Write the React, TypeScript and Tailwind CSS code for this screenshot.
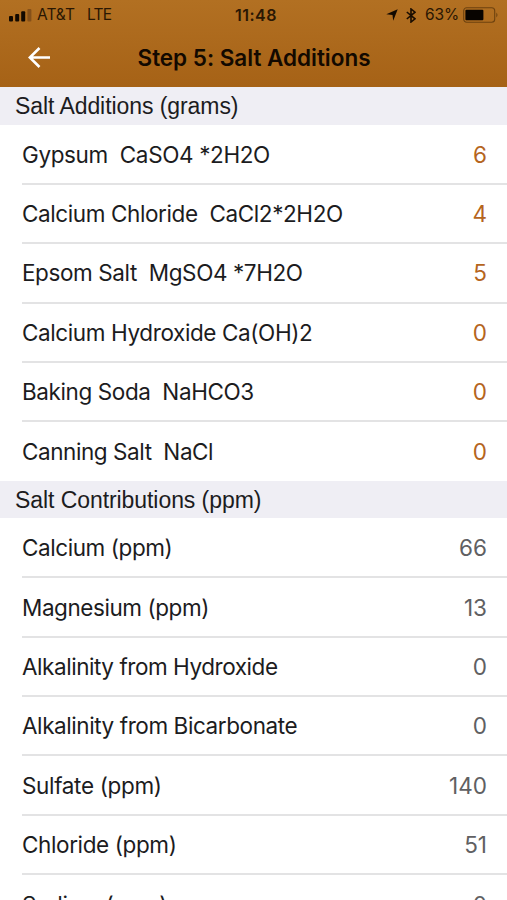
import { clsx } from "clsx";

type Item = { label: string; value: number; spacing: string };

const SALT_ADDITIONS: Item[] = [
  { label: "Gypsum  CaSO4 *2H2O", value: 6, spacing: "tracking-[-0.37px]" },
  { label: "Calcium Chloride  CaCl2*2H2O", value: 4, spacing: "tracking-[-0.4px]" },
  { label: "Epsom Salt  MgSO4 *7H2O", value: 5, spacing: "tracking-[-0.4px]" },
  { label: "Calcium Hydroxide Ca(OH)2", value: 0, spacing: "tracking-[-0.39px]" },
  { label: "Baking Soda  NaHCO3", value: 0, spacing: "tracking-[-0.4px]" },
  { label: "Canning Salt  NaCl", value: 0, spacing: "tracking-[-0.43px]" },
];

const SALT_CONTRIBUTIONS: Item[] = [
  { label: "Calcium (ppm)", value: 66, spacing: "tracking-[-0.42px]" },
  { label: "Magnesium (ppm)", value: 13, spacing: "tracking-[-0.44px]" },
  { label: "Alkalinity from Hydroxide", value: 0, spacing: "tracking-[-0.45px]" },
  { label: "Alkalinity from Bicarbonate", value: 0, spacing: "tracking-[-0.42px]" },
  { label: "Sulfate (ppm)", value: 140, spacing: "tracking-[-0.34px]" },
  { label: "Chloride (ppm)", value: 51, spacing: "tracking-[-0.38px]" },
  { label: "Sodium (ppm)", value: 0, spacing: "tracking-[-0.42px]" },
];

function StatusBar() {
  return (
    <div className="grid h-[29px] grid-cols-3 items-center pt-px text-[15.5px] text-[#2a1703]">
      <div className="flex items-center pl-[9px]">
        <svg width="23" height="13" viewBox="0 0 23 13" className="mr-[5px]">
          <rect x="0" y="7" width="4" height="5.5" rx="1" fill="#120900" />
          <rect x="6.2" y="5" width="4" height="7.5" rx="1" fill="#120900" />
          <rect x="12.2" y="2.2" width="4" height="10.3" rx="1" fill="#120900" />
          <rect x="18.4" y="0" width="4" height="12.5" rx="1" fill="#855019" />
        </svg>
        <span className="whitespace-pre">AT&amp;T</span>
        <span className="ml-[12px] tracking-[-0.7px]">LTE</span>
      </div>
      <div className="pl-[5px] text-center text-[16px] font-semibold tracking-[0.5px]">11:48</div>
      <div className="flex items-center justify-end pr-[8px]">
        <svg width="12" height="12" viewBox="0 0 12 12" className="mr-[8px]">
          <path d="M11.7.3 7.2 11.7 6.5 5.9.3 5.2z" fill="#120900" />
        </svg>
        <svg width="10" height="15" viewBox="0 0 10 15" className="mr-[9px]" fill="none" stroke="#1a0d00" strokeWidth="1.6">
          <path d="M.8 4 9 10.8 5 14V1l4 3.2L.8 11" />
        </svg>
        <span className="mr-[4px] tracking-[-0.1px]">63%</span>
        <svg width="36" height="16" viewBox="0 0 36 16">
          <rect x=".7" y=".7" width="31" height="14.6" rx="3" fill="none" stroke="#6d420f" strokeWidth="1.1" />
          <rect x="2.4" y="2.7" width="18" height="10.6" rx="1" fill="#080400" />
          <path d="M33.3 5.5q2.4 2.5 0 5z" fill="#6d420f" />
        </svg>
      </div>
    </div>
  );
}

function Header() {
  return (
    <header className="h-[87px] bg-linear-to-b from-[#b27022] to-[#a66216]">
      <StatusBar />
      <div className="grid h-[57px] grid-cols-[80px_1fr_80px] items-center">
        <button className="pl-[28px]" aria-label="Back">
          <svg width="22" height="22" viewBox="0 0 22 22" fill="none" stroke="white" strokeWidth="2.6">
            <path d="M11.5 1 1.8 10.5l9.7 9.5M2 10.5h20" />
          </svg>
        </button>
        <h1 className="whitespace-nowrap pl-px text-center text-[22.5px] font-semibold tracking-[-0.02px] text-[#120900]">
          Step 5: Salt Additions
        </h1>
      </div>
    </header>
  );
}

function Row({ item, editable, last }: { item: Item; editable?: boolean; last: boolean }) {
  return (
    <li
      className={clsx(
        "ml-[22px] flex h-[59.35px] items-center justify-between border-[#e3e3e4] pr-[20px] pt-px",
        !last && "border-b-2"
      )}
    >
      <span className={clsx("whitespace-pre", item.spacing)}>{item.label}</span>
      <span className={editable ? "text-[#b5651d]" : "text-[#606062]"}>{item.value}</span>
    </li>
  );
}

function Section({ title, items, editable }: { title: string; items: Item[]; editable?: boolean }) {
  return (
    <section>
      <h2 className="h-[37.5px] bg-[#efeef4] pl-[15px] font-['Liberation_Sans',sans-serif] text-[23px] leading-[39px] tracking-[-0.07px] text-[#1c1c1e]">
        {title}
      </h2>
      <ul className="-mb-px pt-px text-[22.5px] leading-[28px] text-[#1c1c1e]">
        {items.map((item, i) => (
          <Row key={item.label} item={item} editable={editable} last={i === items.length - 1} />
        ))}
      </ul>
    </section>
  );
}

export default function App() {
  return (
    <div className="h-[900px] w-[507px] overflow-hidden bg-white font-['Inter',sans-serif] [font-feature-settings:'calt'_0]">
      <Header />
      <Section title="Salt Additions (grams)" items={SALT_ADDITIONS} editable />
      <Section title="Salt Contributions (ppm)" items={SALT_CONTRIBUTIONS} />
    </div>
  );
}
